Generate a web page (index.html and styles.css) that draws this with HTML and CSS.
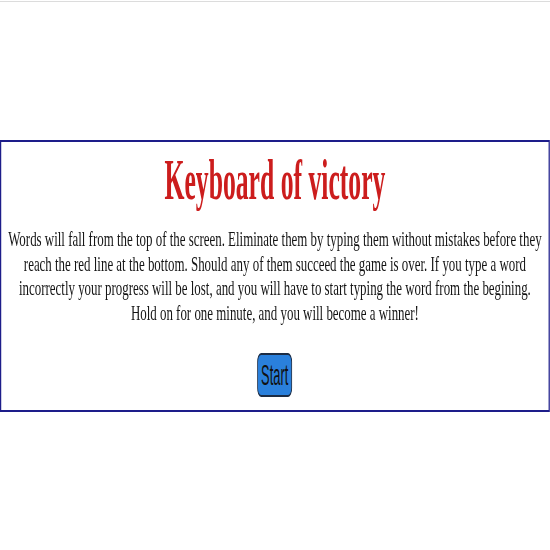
FILE: index.html
```html
<!DOCTYPE html>
<html lang="en">
<head>
<meta charset="utf-8">
<title>Keyboard of victory</title>
<link rel="stylesheet" href="styles.css">
</head>
<body>
<div class="viewport">
  <div class="topline"></div>
  <div class="stage">
    <section class="panel">
      <h1 class="title"><span class="title-text">Keyboard of victory</span></h1>
      <p class="rules">Words will fall from the top of the screen. Eliminate them by typing them without mistakes before they reach the red line at the bottom. Should any of them succeed the game is over. If you type a word incorrectly your progress will be lost, and you will have to start typing the word from the begining. Hold on for one minute, and you will become a winner!</p>
      <div class="actions"><button class="start" type="button">Start</button></div>
    </section>
  </div>
</div>
</body>
</html>
```

FILE: styles.css
```css
html, body {
  margin: 0;
  padding: 0;
  background: #ffffff;
  overflow: hidden;
}

.viewport {
  position: relative;
  width: 100vw;
  height: 100vh;
  overflow: hidden;
}

.topline {
  position: absolute;
  top: 1px;
  left: 0;
  width: 100%;
  height: 1px;
  background: #dcdcdc;
}

.stage {
  width: 894px;
  height: 552px;
  display: flex;
  align-items: center;
  transform: scale(0.615, 1);
  transform-origin: 0 0;
}

.panel {
  flex: 1;
  border: 2px solid #1d1d8a;
  text-align: center;
  font-family: "Liberation Serif", "Times New Roman", serif;
  color: #141414;
  padding: 0 0 13px;
}

.title {
  margin: 6px 0 0;
  font-size: 56px;
  font-weight: bold;
  color: #cc1d1d;
  line-height: 64px;
}

.title-text {
  display: inline-block;
  transform: scaleX(0.745);
}

.rules {
  margin: 15px 8px 28px;
  font-size: 21px;
  line-height: 24.5px;
}

.actions {
  display: flex;
  justify-content: center;
}

.start {
  font-family: "Liberation Sans", Arial, sans-serif;
  font-size: 29px;
  line-height: 32px;
  color: #111;
  background: #2a80dc;
  border: 2px solid #1c2c44;
  border-radius: 9px;
  padding: 4px 7px;
  transform: scaleX(0.72);
  cursor: pointer;
}
```
